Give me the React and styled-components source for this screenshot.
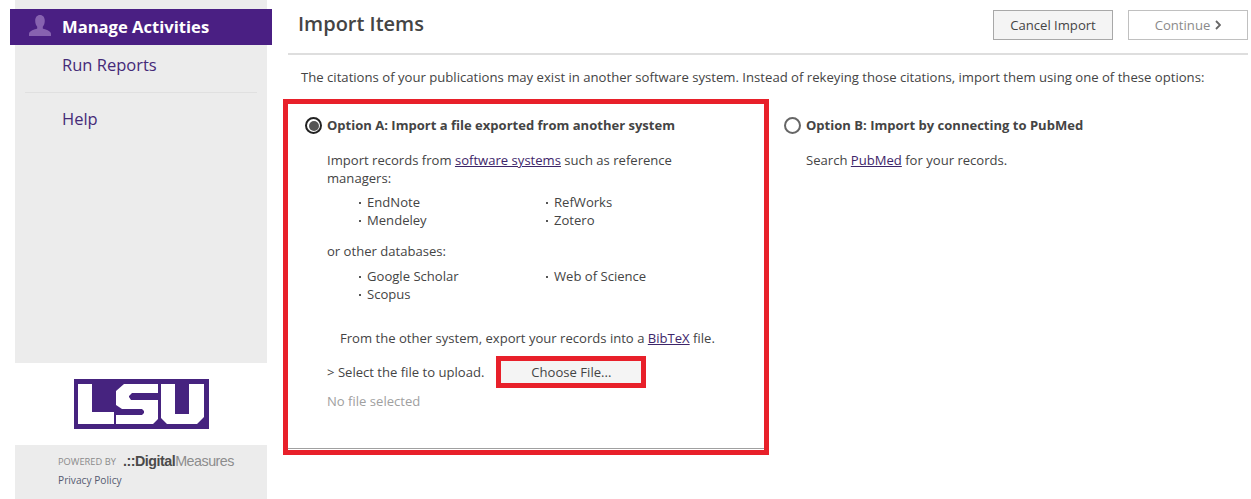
import React from 'react';
import styled, { createGlobalStyle } from 'styled-components';

const GlobalStyle = createGlobalStyle`
  html, body {
    margin: 0;
    padding: 0;
    background: #fff;
    font-family: "Open Sans", "Liberation Sans", sans-serif;
    font-size: 13.13px;
    color: #444;
  }
`;

const Page = styled.div`
  display: flex;
  width: 1251px;
  height: 499px;
  overflow: hidden;
`;

const Sidebar = styled.aside`
  display: flex;
  flex-direction: column;
  width: 252px;
  margin-left: 15px;
  flex-shrink: 0;
`;

const Nav = styled.nav`
  height: 363px;
  padding-top: 9px;
  box-sizing: border-box;
  background: #ececec;
`;

const ActiveItem = styled.div`
  display: flex;
  align-items: center;
  gap: 10px;
  height: 36px;
  margin: 0 -5px;
  padding: 0 0 2px 18px;
  box-sizing: border-box;
  background: #4a1f83;
  color: #fff;
  font-size: 16.6px;
  font-weight: 700;
`;

const NavItem = styled.div`
  height: 40px;
  padding-left: 47px;
  color: #452a78;
  font-size: 16.5px;
  line-height: 40px;
`;

const NavRule = styled.div`
  height: 1px;
  margin: 7px 10px 6px;
  background: #e0e0e0;
`;

const LogoArea = styled.div`
  display: flex;
  justify-content: center;
  align-items: flex-start;
  height: 82px;
  padding-top: 16px;
  box-sizing: border-box;
`;

const Footer = styled.footer`
  flex: 1;
  padding: 8px 0 0 43px;
  background: #ececec;
`;

const PoweredRow = styled.div`
  display: flex;
  align-items: center;
  height: 16px;
  color: #8a8a8a;
`;

const PoweredBy = styled.span`
  width: 65px;
  font-size: 9.3px;
`;

const Brand = styled.span`
  font-family: "Liberation Sans", sans-serif;
  font-size: 14.3px;
  letter-spacing: -0.5px;
  color: #8d8d8d;
`;

const BrandStrong = styled.b`
  color: #4a4a4a;
`;

const Privacy = styled.div`
  margin-top: 4px;
  color: #555a70;
  font-size: 10.2px;
`;

const Main = styled.main`
  flex: 1;
  padding: 0 3px 0 21px;
  min-width: 0;
`;

const Header = styled.header`
  display: flex;
  justify-content: space-between;
  align-items: flex-start;
  height: 55px;
  padding: 10px 0 0 10px;
  box-sizing: border-box;
  border-bottom: 2px solid #dedede;
`;

const Title = styled.h1`
  margin: 0;
  color: #444;
  font-size: 20px;
  font-weight: 600;
  line-height: 28px;
`;

const Actions = styled.div`
  display: flex;
  gap: 15px;
`;

const Button = styled.button`
  display: inline-flex;
  align-items: center;
  justify-content: center;
  gap: 5px;
  width: 120px;
  height: 30px;
  padding: 0;
  border: 1px solid ${(p) => (p.$disabled ? '#c0c0c0' : '#a8a8a8')};
  background: ${(p) => (p.$disabled ? '#fff' : '#f4f4f4')};
  color: ${(p) => (p.$disabled ? '#8a8a8a' : '#444')};
  font-family: inherit;
  font-size: 13.1px;
`;

const Intro = styled.p`
  margin: 0;
  padding: 13px 0 13px 13px;
  line-height: 18px;
`;

const Options = styled.div`
  display: flex;
  margin-left: -5px;
`;

const OptionA = styled.section`
  width: 486px;
  height: 356px;
  box-sizing: border-box;
  border: 5px solid #e8202a;
`;

const OptionAInner = styled.div`
  height: 345px;
  padding: 12px 17px 0 17px;
  box-sizing: border-box;
  border-bottom: 1px solid #a0a0a0;
`;

const OptionB = styled.section`
  padding: 17px 0 0 15px;
`;

const OptionHead = styled.div`
  display: flex;
  align-items: center;
  gap: 5px;
  height: 18px;
  font-weight: 700;
  font-size: 13.04px;
`;

const Radio = styled.span`
  width: 17px;
  height: 17px;
  box-sizing: border-box;
  border: ${(p) => (p.$checked ? '2.5px solid #222' : '2px solid #666')};
  border-radius: 50%;
  padding: 1.5px;
  background-clip: content-box;
  background-color: ${(p) => (p.$checked ? '#555' : 'transparent')};
`;

const OptionBody = styled.div`
  margin: 17px 0 0 22px;
  font-size: 13.08px;
  line-height: 18px;
`;

const Text = styled.p`
  margin: 0;
  padding-left: ${(p) => p.$indent || 0}px;
`;

const Link = styled.a`
  color: #3d2569;
  text-decoration: underline;
`;

const BulletGrid = styled.ul`
  display: grid;
  grid-template-columns: 187px 187px;
  margin: ${(p) => p.$before}px 0 ${(p) => p.$after}px;
  padding: 0 0 0 30px;
  list-style: none;
`;

const Bullet = styled.li`
  position: relative;
  padding-left: 10px;
  &::before {
    content: '';
    position: absolute;
    left: 2px;
    top: 9px;
    width: 2px;
    height: 2px;
    background: #555;
  }
`;

const UploadRow = styled.div`
  display: flex;
  align-items: center;
  margin-top: 9px;
`;

const ChooseFile = styled.button`
  width: 150px;
  height: 32px;
  margin-left: 12px;
  border: 5px solid #e8202a;
  background: #f4f4f4;
  color: #444;
  font-family: inherit;
  font-size: 13.08px;
`;

const NoFile = styled.p`
  margin: 4px 0 0;
  color: #a0a0a0;
`;

const PersonIcon = () => (
  <svg width="24" height="22" viewBox="0 0 24 22">
    <path
      fill="#8762b0"
      d="M12 0c3 0 4.800 2.400 4.800 5.800 0 2.500-.8 4.700-2 6v1.700c2.500 1.100 7.800 1.900 8.200 5.200V21H1v-2.300c.4-3.300 5.700-4.100 8.200-5.200v-1.700c-1.200-1.300-2-3.500-2-6C7.200 2.400 9 0 12 0z"
    />
  </svg>
);

const LsuLogo = () => (
  <svg width="135" height="50" viewBox="0 0 135 50">
    <rect width="135" height="50" fill="#46237f" />
    <path
      fill="#fff"
      d="M4 5H18V33H40V45H4zM50 5H84V14H58L55 17V18L57 21H84V40L79 45H42V36H68L70 34V32L68 30H48L42 26V12zM87 5H101V35H115V5H130V38L123 45H93L87 39z"
    />
  </svg>
);

const ChevronIcon = () => (
  <svg width="6" height="10" viewBox="0 0 6 10">
    <path d="M1 1l4 4-4 4" fill="none" stroke="#666" strokeWidth="1.8" />
  </svg>
);

const App = () => (
  <Page>
    <GlobalStyle />
    <Sidebar>
      <Nav>
        <ActiveItem>
          <PersonIcon />
          Manage Activities
        </ActiveItem>
        <NavItem>Run Reports</NavItem>
        <NavRule />
        <NavItem>Help</NavItem>
      </Nav>
      <LogoArea>
        <LsuLogo />
      </LogoArea>
      <Footer>
        <PoweredRow>
          <PoweredBy>POWERED BY</PoweredBy>
          <Brand>
            <BrandStrong>.::Digital</BrandStrong>Measures
          </Brand>
        </PoweredRow>
        <Privacy>Privacy Policy</Privacy>
      </Footer>
    </Sidebar>
    <Main>
      <Header>
        <Title>Import Items</Title>
        <Actions>
          <Button>Cancel Import</Button>
          <Button $disabled>
            Continue <ChevronIcon />
          </Button>
        </Actions>
      </Header>
      <Intro>
        The citations of your publications may exist in another software system. Instead of
        rekeying those citations, import them using one of these options:
      </Intro>
      <Options>
        <OptionA>
          <OptionAInner>
            <OptionHead>
              <Radio $checked />
              Option A: Import a file exported from another system
            </OptionHead>
            <OptionBody>
              <Text>
                Import records from <Link>software systems</Link> such as reference
                <br />
                managers:
              </Text>
              <BulletGrid $before={6} $after={13}>
                <Bullet>EndNote</Bullet>
                <Bullet>RefWorks</Bullet>
                <Bullet>Mendeley</Bullet>
                <Bullet>Zotero</Bullet>
              </BulletGrid>
              <Text>or other databases:</Text>
              <BulletGrid $before={7} $after={26}>
                <Bullet>Google Scholar</Bullet>
                <Bullet>Web of Science</Bullet>
                <Bullet>Scopus</Bullet>
              </BulletGrid>
              <Text $indent={13}>
                From the other system, export your records into a <Link>BibTeX</Link> file.
              </Text>
              <UploadRow>
                &gt; Select the file to upload.
                <ChooseFile>Choose File...</ChooseFile>
              </UploadRow>
              <NoFile>No file selected</NoFile>
            </OptionBody>
          </OptionAInner>
        </OptionA>
        <OptionB>
          <OptionHead>
            <Radio />
            Option B: Import by connecting to PubMed
          </OptionHead>
          <OptionBody>
            <Text>
              Search <Link>PubMed</Link> for your records.
            </Text>
          </OptionBody>
        </OptionB>
      </Options>
    </Main>
  </Page>
);

export default App;
